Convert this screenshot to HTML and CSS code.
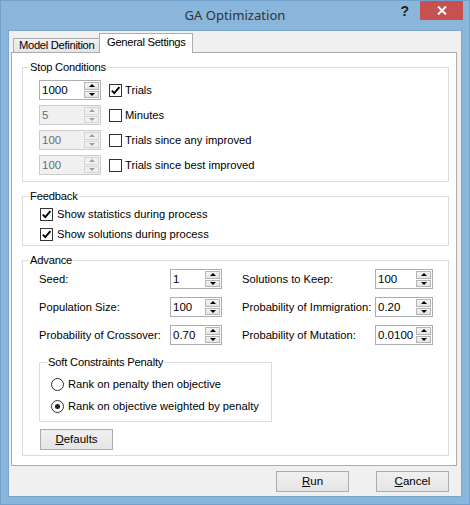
FILE: index.html
```html
<!DOCTYPE html>
<html>
<head>
<meta charset="utf-8">
<link rel="stylesheet" href="styles.css">
</head>
<body>
<div class="window">
  <div class="titlebar">
    <div class="title">GA Optimization</div>
    <div class="caption-btns">
      <div class="help">?</div>
      <div class="close"><svg width="10" height="9" viewBox="0 0 10 9"><path d="M1 0.5 L9 8.5 M9 0.5 L1 8.5" stroke="#fff" stroke-width="2"/></svg></div>
    </div>
  </div>
  <div class="client">
    <div class="tabs">
      <div class="tab">Model Definition</div>
      <div class="tab active">General Settings</div>
    </div>
    <div class="panel">
      <fieldset class="group stop">
        <legend>Stop Conditions</legend>
        <div class="stop-body">
          <div class="stop-row">
            <div class="spin w62"><span class="val">1000</span><div class="spin-btns"><span class="sb up"></span><span class="sb down"></span></div></div>
            <span class="check checked"><svg width="11" height="11" viewBox="0 0 11 11"><path d="M1.8 5.6 L4.3 8.2 L9.4 2.2" fill="none" stroke="#000" stroke-width="1.9"/></svg></span>
            <span class="lbl">Trials</span>
          </div>
          <div class="stop-row">
            <div class="spin w62 disabled"><span class="val">5</span><div class="spin-btns"><span class="sb up"></span><span class="sb down"></span></div></div>
            <span class="check"></span>
            <span class="lbl">Minutes</span>
          </div>
          <div class="stop-row">
            <div class="spin w62 disabled"><span class="val">100</span><div class="spin-btns"><span class="sb up"></span><span class="sb down"></span></div></div>
            <span class="check"></span>
            <span class="lbl">Trials since any improved</span>
          </div>
          <div class="stop-row">
            <div class="spin w62 disabled"><span class="val">100</span><div class="spin-btns"><span class="sb up"></span><span class="sb down"></span></div></div>
            <span class="check"></span>
            <span class="lbl">Trials since best improved</span>
          </div>
        </div>
      </fieldset>

      <fieldset class="group feedback">
        <legend>Feedback</legend>
        <div class="feedback-body">
          <div class="fb-row">
            <span class="check checked"><svg width="11" height="11" viewBox="0 0 11 11"><path d="M1.8 5.6 L4.3 8.2 L9.4 2.2" fill="none" stroke="#000" stroke-width="1.9"/></svg></span>
            <span class="lbl">Show statistics during process</span>
          </div>
          <div class="fb-row">
            <span class="check checked"><svg width="11" height="11" viewBox="0 0 11 11"><path d="M1.8 5.6 L4.3 8.2 L9.4 2.2" fill="none" stroke="#000" stroke-width="1.9"/></svg></span>
            <span class="lbl">Show solutions during process</span>
          </div>
        </div>
      </fieldset>

      <fieldset class="group advance">
        <legend>Advance</legend>
        <div class="advance-body">
          <div class="adv-grid">
            <span class="lbl">Seed:</span>
            <div class="spin"><span class="val">1</span><div class="spin-btns"><span class="sb up"></span><span class="sb down"></span></div></div>
            <span></span>
            <span class="lbl">Solutions to Keep:</span>
            <div class="spin"><span class="val">100</span><div class="spin-btns"><span class="sb up"></span><span class="sb down"></span></div></div>

            <span class="lbl">Population Size:</span>
            <div class="spin"><span class="val">100</span><div class="spin-btns"><span class="sb up"></span><span class="sb down"></span></div></div>
            <span></span>
            <span class="lbl">Probability of Immigration:</span>
            <div class="spin"><span class="val">0.20</span><div class="spin-btns"><span class="sb up"></span><span class="sb down"></span></div></div>

            <span class="lbl">Probability of Crossover:</span>
            <div class="spin"><span class="val">0.70</span><div class="spin-btns"><span class="sb up"></span><span class="sb down"></span></div></div>
            <span></span>
            <span class="lbl">Probability of Mutation:</span>
            <div class="spin"><span class="val">0.0100</span><div class="spin-btns"><span class="sb up"></span><span class="sb down"></span></div></div>
          </div>

          <fieldset class="group soft">
            <legend>Soft Constraints Penalty</legend>
            <div class="soft-body">
              <div class="radio-row"><span class="radio"></span><span class="lbl">Rank on penalty then objective</span></div>
              <div class="radio-row"><span class="radio selected"></span><span class="lbl">Rank on objective weighted by penalty</span></div>
            </div>
          </fieldset>

          <div class="btn defaults"><span class="u">D</span>efaults</div>
        </div>
      </fieldset>
    </div>
    <div class="buttons">
      <div class="btn"><span class="u">R</span>un</div>
      <div class="btn"><span class="u">C</span>ancel</div>
    </div>
  </div>
</div>
</body>
</html>
```

FILE: styles.css
```css
* { box-sizing: border-box; }
html, body { margin: 0; padding: 0; }
body {
  width: 470px;
  height: 505px;
  overflow: hidden;
  font-family: "Liberation Sans", Arial, sans-serif;
  font-size: 11.2px;
  color: #000;
  background: #8bb6dc;
}
.window {
  width: 470px;
  height: 505px;
  background: #8bb6dc;
  border: 1px solid #729fcb;
  display: flex;
  flex-direction: column;
}
.titlebar {
  height: 29px;
  flex: none;
  display: grid;
  grid-template-columns: 1fr auto 1fr;
}
.title {
  grid-column: 2;
  font-family: "Noto Sans", "Open Sans", sans-serif;
  font-size: 13.1px;
  color: #333;
  line-height: 29px;
}
.caption-btns {
  grid-column: 3;
  display: flex;
  justify-content: flex-end;
  align-items: flex-start;
}
.help {
  font-family: "Liberation Sans", Arial, sans-serif;
  font-weight: bold;
  font-size: 14px;
  line-height: 16px;
  color: #222;
  margin-top: 2px;
  margin-right: 11px;
}
.close {
  width: 43px;
  height: 19px;
  background: #c75050;
  margin-right: 6px;
  display: flex;
  align-items: center;
  justify-content: center;
}
.close svg { display: block; }

.client {
  margin: 0 7px;
  height: 467px;
  flex: none;
  border: 1px solid #7aa5cf;
  background: #f0f0f0;
  padding: 2px 4px 0 2px;
  display: flex;
  flex-direction: column;
}
.tabs {
  height: 19px;
  display: flex;
  align-items: flex-end;
  padding-left: 2px;
}
.tab {
  height: 14px;
  width: 87px;
  border: 1px solid #acacac;
  border-bottom: none;
  background: linear-gradient(#f0f0f0, #e5e5e5);
  line-height: 13px;
  padding-left: 5px;
  white-space: nowrap;
  letter-spacing: -0.3px;
}
.tab.active {
  height: 20px;
  width: 94px;
  margin-left: -1px;
  margin-bottom: -1px;
  background: #fff;
  position: relative;
  z-index: 1;
  padding-left: 7px;
  padding-top: 2px;
}
.panel {
  width: 446px;
  height: 414px;
  border: 1px solid #acacac;
  background: #fff;
  padding: 0 7px 0 10px;
}

fieldset.group {
  margin: 0;
  padding: 0;
  border: 1px solid #dcdcdc;
  min-width: 0;
}
fieldset.group > legend {
  padding: 0 1px;
  margin-left: 6px;
  line-height: 13px;
  letter-spacing: -0.2px;
}
fieldset.stop { margin-top: 8px; }
fieldset.feedback { margin-top: 8px; }
fieldset.advance { margin-top: 8px; }

.stop-body {
  padding: 6px 0 6px 16px;
  display: flex;
  flex-direction: column;
  gap: 5px;
}
.stop-row {
  height: 20px;
  display: flex;
  align-items: center;
}
.stop-row .check { margin-left: 8px; margin-right: 3px; }

.feedback-body { padding: 1px 0 1px 17px; }
.fb-row {
  height: 20px;
  display: flex;
  align-items: center;
  gap: 4px;
}

.advance-body { padding: 2px 0 5px 16px; }
.adv-grid {
  display: grid;
  grid-template-columns: 131px 52px 20px 133px 58px;
  grid-auto-rows: 20px;
  row-gap: 8px;
  align-items: center;
}
fieldset.soft {
  margin-top: 11px;
  width: 233px;
}
fieldset.soft > legend { margin-left: 7px; }
.soft-body {
  padding: 5px 0 5px 11px;
  display: flex;
  flex-direction: column;
  gap: 2px;
}
.radio-row {
  height: 20px;
  display: flex;
  align-items: center;
  gap: 4px;
}

.lbl { white-space: nowrap; }

.check {
  width: 13px;
  height: 13px;
  flex: none;
  border: 1px solid #333;
  background: #fff;
  display: flex;
  align-items: center;
  justify-content: center;
}
.check svg { display: block; }
.radio {
  width: 13px;
  height: 13px;
  flex: none;
  border: 1px solid #333;
  border-radius: 50%;
  background: #fff;
  display: flex;
  align-items: center;
  justify-content: center;
}
.radio.selected::after {
  content: "";
  width: 5px;
  height: 5px;
  border-radius: 50%;
  background: #1a1a1a;
}

.spin {
  height: 20px;
  display: flex;
  border: 1px solid #abadb3;
  background: #fff;
}
.spin.w62 { width: 62px; flex: none; }
.spin .val {
  flex: 1;
  padding-left: 2px;
  line-height: 18px;
  font-size: 11.5px;
}
.spin-btns {
  width: 16px;
  display: flex;
  flex-direction: column;
  gap: 1px;
  padding: 1px 1px 1px 0;
}
.sb {
  flex: 1;
  border: 1px solid #b5b5b5;
  background: linear-gradient(#f4f4f4, #e4e4e4);
  display: flex;
  align-items: center;
  justify-content: center;
}
.sb::after {
  content: "";
  width: 0;
  height: 0;
  border-left: 3px solid transparent;
  border-right: 3px solid transparent;
}
.sb.up::after { border-bottom: 3px solid #000; }
.sb.down::after { border-top: 3px solid #000; }
.spin.disabled { background: #f0f0f0; border-color: #cccccc; }
.spin.disabled .val { color: #6d6d6d; }
.spin.disabled .sb { border-color: #d5d5d5; background: #f0f0f0; }
.spin.disabled .sb.up::after { border-bottom-color: #a0a0a0; }
.spin.disabled .sb.down::after { border-top-color: #a0a0a0; }

.btn {
  width: 73px;
  height: 21px;
  border: 1px solid #acacac;
  background: linear-gradient(#f0f0f0, #e5e5e5);
  text-align: center;
  line-height: 19px;
  font-size: 11.5px;
}
.u { text-decoration: underline; }
.defaults { margin-top: 7px; margin-left: 1px; }
.buttons {
  display: flex;
  justify-content: flex-end;
  gap: 27px;
  margin-top: 5px;
  padding-right: 8px;
}
```
